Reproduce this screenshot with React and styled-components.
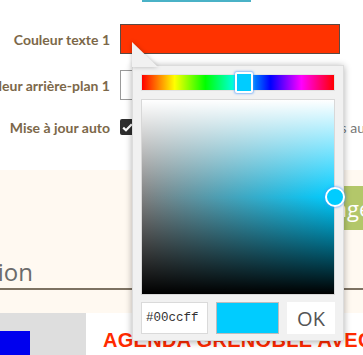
import React from "react";
import styled, { createGlobalStyle } from "styled-components";

const Global = createGlobalStyle`
  html, body { margin: 0; padding: 0; background: #fff; }
  body { width: 363px; height: 355px; overflow: hidden; }
`;

const Page = styled.div`
  position: relative;
  width: 363px;
  height: 355px;
  overflow: hidden;
  font-family: Lato, "Open Sans", sans-serif;
`;

const TopBar = styled.div`
  height: 24px;
  padding-left: 142px;
`;

const TealLine = styled.div`
  width: 109px;
  height: 2px;
  background: #4ab2c7;
`;

const Form = styled.div`
  display: grid;
  grid-template-columns: 110px 1fr;
  column-gap: 10px;
  grid-template-rows: 30px 30px 16px;
  row-gap: 16px;
  align-items: center;
  & > :nth-child(5), & > :nth-child(6) { margin-top: 6px; }
`;

const Label = styled.div`
  text-align: right;
  white-space: nowrap;
  direction: rtl;
  font-weight: 700;
  font-size: 14px;
  color: #7c6849;
  & > span { direction: ltr; unicode-bidi: isolate; }
`;

const ColorField = styled.div`
  width: 220px;
  height: 30px;
  box-sizing: border-box;
  border: 1px solid ${p => (p.$dark ? "#5a4a44" : "#9a9a9a")};
  background: ${p => p.$color};
`;

const CheckRow = styled.div`
  display: flex;
  align-items: center;
  gap: 8px;
  white-space: nowrap;
`;

const Check = styled.div`
  width: 15px;
  height: 16px;
  border-radius: 2px;
  background: #2e2e2e;
  display: flex;
  align-items: center;
  justify-content: center;
  flex: none;
`;

const CheckText = styled.span`
  font-size: 14px;
  color: #777;
`;

const Beige = styled.div`
  margin-top: 38px;
  height: 143px;
  background: #fff9f1;
  display: flex;
  flex-direction: column;
`;

const ButtonRow = styled.div`
  display: flex;
  padding-top: 16px;
  padding-left: 280px;
`;

const GreenButton = styled.div`
  height: 44px;
  padding: 0 14px;
  background: #b3c76a;
  color: #fff;
  font-family: "Open Sans", sans-serif;
  font-size: 22px;
  line-height: 44px;
  white-space: nowrap;
`;

const Heading = styled.div`
  margin-top: 27px;
  margin-left: -143px;
  font-family: "Open Sans", sans-serif;
  font-size: 24px;
  line-height: 30px;
  color: #6b6b6b;
  white-space: nowrap;
`;

const Rule = styled.div`
  margin-top: 1px;
  height: 2px;
  background: #7d7262;
`;

const Bottom = styled.div`
  display: flex;
  height: 42px;
`;

const GrayPanel = styled.div`
  flex: none;
  width: 86px;
  background: #dedede;
  padding-top: 18px;
  box-sizing: border-box;
`;

const BlueBox = styled.div`
  width: 30px;
  height: 24px;
  background: #0000ee;
`;

const RedTitle = styled.div`
  padding: 16px 0 0 17px;
  font-family: "Liberation Sans", Arial, sans-serif;
  font-weight: 700;
  font-size: 20px;
  color: #ff2a00;
  white-space: nowrap;
  letter-spacing: 0.3px;
`;

/* Colour picker popup */
const Popup = styled.div`
  position: absolute;
  left: 132px;
  top: 65px;
  width: 212px;
  height: 276px;
  box-sizing: border-box;
  padding: 8px 8px 6px 8px;
  background: #f1f1f1;
  border: 1px solid #dcdcdc;
  box-shadow: 0 1px 7px rgba(0, 0, 0, 0.32);
  display: flex;
  flex-direction: column;
`;

const Arrow = styled.svg`
  position: absolute;
  left: -1px;
  top: -24px;
  filter: drop-shadow(0 0 2px rgba(0,0,0,0.25));
`;

const HueBar = styled.div`
  position: relative;
  height: 17px;
  box-sizing: border-box;
  background: linear-gradient(to right, #f00 0%, #ff0 17%, #0f0 33%, #0ff 50%, #00f 67%, #f0f 83%, #f00 100%);
  border: 1px solid #e2e2e2;
  flex: none;
`;

const HueHandle = styled.div`
  position: absolute;
  top: -3px;
  left: 93px;
  width: 18px;
  height: 21px;
  box-sizing: border-box;
  border-radius: 2px;
  background: #00ccff;
  border: 2px solid #fff;
  box-shadow: 0 0 2px 1px rgba(70, 150, 255, 0.6);
`;

const SVArea = styled.div`
  position: relative;
  margin-top: 8px;
  height: 196px;
  box-sizing: border-box;
  flex: none;
  border: 1px solid #d8d8d8;
  background:
    linear-gradient(to bottom, #fff 0%, rgba(255,255,255,0) 50%, rgba(0,0,0,0) 50%, #000 100%),
    linear-gradient(to right, #808080, #00ccff);
`;

const SVHandle = styled.div`
  position: absolute;
  right: -11px;
  top: 87px;
  width: 20px;
  height: 20px;
  box-sizing: border-box;
  border-radius: 50%;
  background: #00ccff;
  border: 2px solid #fff;
  box-shadow: 0 0 2px 1px rgba(70, 150, 255, 0.5);
`;

const Controls = styled.div`
  margin-top: 7px;
  display: grid;
  grid-template-columns: 67px 63px 1fr;
  gap: 8px;
  height: 32px;
`;

const HexInput = styled.div`
  box-sizing: border-box;
  border: 1px solid #dadada;
  background: #fff;
  font-family: "Liberation Mono", "DejaVu Sans Mono", monospace;
  font-size: 12.5px;
  color: #333;
  display: flex;
  align-items: center;
  padding-left: 4px;
`;

const Swatch = styled.div`
  box-sizing: border-box;
  border: 1px solid #bdbdbd;
  background: #00ccff;
`;

const OkButton = styled.div`
  background: #fff;
  color: #555;
  font-family: "Open Sans", sans-serif;
  font-size: 20px;
  display: flex;
  align-items: center;
  justify-content: center;
`;

export default function App() {
  return (
    <Page>
      <Global />
      <TopBar><TealLine /></TopBar>
      <Form>
        <Label><span>Couleur texte 1</span></Label>
        <ColorField $color="#ff3300" $dark />
        <Label><span>Couleur arrière-plan 1</span></Label>
        <ColorField $color="#fff" />
        <Label><span>Mise à jour auto</span></Label>
        <CheckRow>
          <Check>
            <svg width="11" height="9" viewBox="0 0 11 9">
              <path d="M1.2 4.6 L4 7.3 L9.8 1.3" fill="none" stroke="#fff" strokeWidth="2.2" />
            </svg>
          </Check>
          <CheckText>Activer la mise à jour des aperçus automatique</CheckText>
        </CheckRow>
      </Form>
      <Beige>
        <ButtonRow><GreenButton>Changer</GreenButton></ButtonRow>
        <Heading>Prévisualisation</Heading>
        <Rule />
      </Beige>
      <Bottom>
        <GrayPanel><BlueBox /></GrayPanel>
        <RedTitle>AGENDA GRENOBLE AVEC</RedTitle>
      </Bottom>

      <Popup>
        <Arrow width="27" height="25" viewBox="0 0 27 25">
          <path d="M0 0 L26 25 L0 25 Z" fill="#f1f1f1" />
        </Arrow>
        <HueBar><HueHandle /></HueBar>
        <SVArea><SVHandle /></SVArea>
        <Controls>
          <HexInput>#00ccff</HexInput>
          <Swatch />
          <OkButton>OK</OkButton>
        </Controls>
      </Popup>
    </Page>
  );
}
